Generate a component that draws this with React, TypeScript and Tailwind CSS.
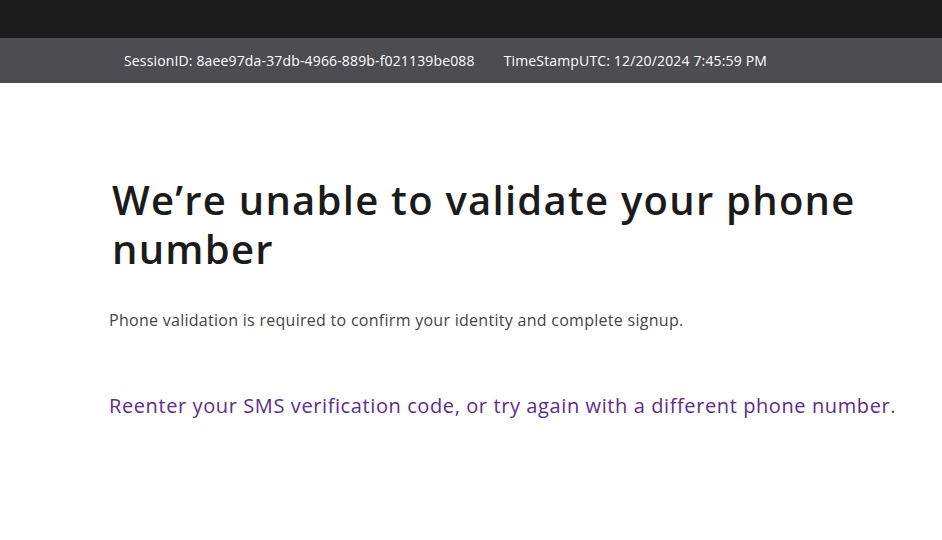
export default function App() {
  return (
    <div className="min-h-screen bg-white" style={{ fontFamily: '"Open Sans", "Noto Sans", sans-serif' }}>
      {/* Top bar */}
      <div className="h-[38px] bg-[#1b1b1b]" />

      {/* Session info bar */}
      <div className="h-[45px] bg-[#4c4c51] flex items-center pl-[124px] text-[14px] tracking-[0.15px] text-white">
        <span>SessionID: 8aee97da-37db-4966-889b-f021139be088</span>
        <span className="ml-[29px]">TimeStampUTC: 12/20/2024 7:45:59 PM</span>
      </div>

      {/* Main content */}
      <main className="pl-[109px] pr-6 pt-[92px]">
        <h1 className="pl-[3px] text-[40px] leading-[49px] tracking-[1.25px] font-semibold text-[#1b1b1b] max-w-[800px]">
          We’re unable to validate your phone number
        </h1>
        <p className="mt-[35px] text-[16px] tracking-[0.28px] text-[#444]">
          Phone validation is required to confirm your identity and complete signup.
        </p>
        <p className="mt-[59px] text-[20px] tracking-[0.6px] text-[#5c2d91]">
          Reenter your SMS verification code, or try again with a different phone number.
        </p>
      </main>
    </div>
  );
}
